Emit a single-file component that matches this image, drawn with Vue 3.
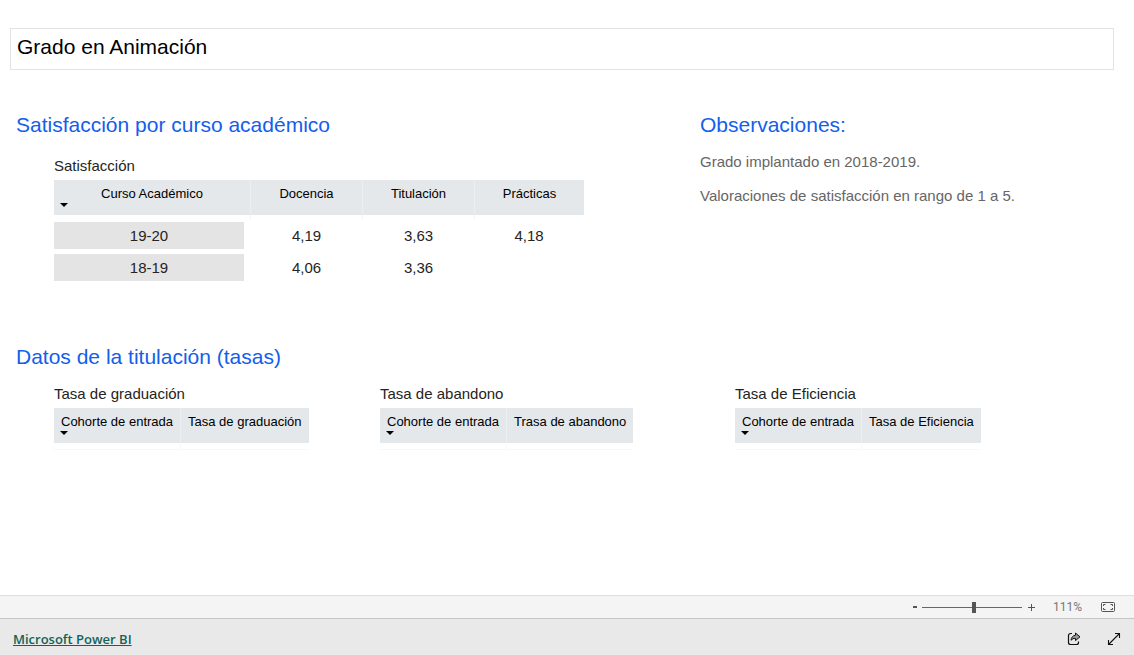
<script setup>
import { ref } from 'vue'

const satisfaction = [
  { year: '19-20', values: ['4,19', '3,63', '4,18'] },
  { year: '18-19', values: ['4,06', '3,36', ''] },
]
const rates = [
  { title: 'Tasa de graduación', measure: 'Tasa de graduación' },
  { title: 'Tasa de abandono', measure: 'Trasa de abandono' },
  { title: 'Tasa de Eficiencia', measure: 'Tasa de Eficiencia' },
]
const zoom = ref(111)
</script>

<template>
  <div class="viewer">
    <main class="report">
      <h1 class="title">Grado en Animación</h1>

      <div class="top">
        <section class="satisfaction">
          <h2>Satisfacción por curso académico</h2>
          <table class="grid scores">
            <caption>Satisfacción</caption>
            <colgroup>
              <col class="c-year" />
              <col class="c-score" />
              <col class="c-score" />
              <col class="c-last" />
            </colgroup>
            <thead>
              <tr>
                <th scope="col" aria-sort="descending">
                  Curso Académico
                  <svg class="sort" viewBox="0 0 8 4" aria-hidden="true"><path d="M0 0h8L4 4z" /></svg>
                </th>
                <th scope="col">Docencia</th>
                <th scope="col">Titulación</th>
                <th scope="col">Prácticas</th>
              </tr>
            </thead>
            <tbody>
              <tr v-for="row in satisfaction" :key="row.year">
                <th scope="row">{{ row.year }}</th>
                <td v-for="(value, i) in row.values" :key="i">{{ value }}</td>
              </tr>
            </tbody>
          </table>
        </section>

        <section class="notes">
          <h2>Observaciones:</h2>
          <p>Grado implantado en 2018-2019.</p>
          <p>Valoraciones de satisfacción en rango de 1 a 5.</p>
        </section>
      </div>

      <section class="rates">
        <h2>Datos de la titulación (tasas)</h2>
        <div class="rate-list">
          <table v-for="rate in rates" :key="rate.title" class="grid rate">
            <caption>{{ rate.title }}</caption>
            <thead>
              <tr>
                <th scope="col" aria-sort="descending">
                  Cohorte de entrada
                  <svg class="sort" viewBox="0 0 8 4" aria-hidden="true"><path d="M0 0h8L4 4z" /></svg>
                </th>
                <th scope="col">{{ rate.measure }}</th>
              </tr>
            </thead>
            <tbody>
              <tr class="empty">
                <td></td>
                <td></td>
              </tr>
            </tbody>
          </table>
        </div>
      </section>
    </main>

    <div class="zoombar">
      <button type="button" class="step" aria-label="Alejar" @click="zoom--">
        <svg width="4" height="2" viewBox="0 0 4 2" aria-hidden="true"><path d="M0 0h4v2H0z" fill="#555" /></svg>
      </button>
      <input v-model.number="zoom" type="range" min="10" max="204" aria-label="Zoom" />
      <button type="button" class="step" aria-label="Acercar" @click="zoom++">
        <svg width="7" height="7" viewBox="0 0 7 7" aria-hidden="true"><path d="M0 3.5h7M3.5 0v7" stroke="#555" /></svg>
      </button>
      <span class="percent">{{ zoom }}%</span>
      <button type="button" aria-label="Ajustar a la página">
        <svg width="14" height="10" viewBox="0 0 14 10" fill="none" stroke="#555">
          <rect x=".5" y=".5" width="13" height="9" rx="1" />
          <path d="M2.5 4V2.5H4.5M9.5 2.5h2V4M11.5 6v1.5h-2M4.5 7.5h-2V6" />
        </svg>
      </button>
    </div>

    <footer class="footer">
      <a href="#">Microsoft Power BI</a>
      <div class="actions">
        <button type="button" aria-label="Compartir">
          <svg width="14" height="14" viewBox="0 0 14 14" fill="none" stroke="#111" stroke-linejoin="round">
            <path d="M5 1.5H3.5A2 2 0 0 0 1.5 3.5v7a2 2 0 0 0 2 2h6a2 2 0 0 0 2-2V9.5" stroke-width="1.2" />
            <path d="M8.500 1 13 4.800 8.500 8.600V6.400C6.500 6.300 5.200 6.900 4 8.300 4.300 5.500 5.800 3.500 8.500 3.200z" fill="#999" />
          </svg>
        </button>
        <button type="button" aria-label="Pantalla completa">
          <svg width="14" height="14" viewBox="0 0 14 14" fill="none" stroke="#111" stroke-width="1.1">
            <path d="M1.5 12.5l11-11M8 1.5h4.5V6M1.5 8v4.5H6" />
          </svg>
        </button>
      </div>
    </footer>
  </div>
</template>

<style>
body {
  margin: 0;
}
</style>

<style scoped>
.viewer {
  display: flex;
  flex-direction: column;
  min-height: 100vh;
  background: #fff;
  color: #000;
  font-family: "Liberation Sans", Arial, sans-serif;
}

.report {
  flex: 1;
  padding: 28px 20px 20px 10px;
}

h1,
h2,
p {
  margin: 0;
  font-weight: 400;
}

.title {
  box-sizing: border-box;
  min-height: 42px;
  padding: 6px;
  border: 1px solid #e3e3e3;
  font-size: 21px;
  line-height: 24px;
}

h2 {
  color: #135eeb;
  font-size: 21px;
  line-height: 24px;
}

.top {
  display: grid;
  grid-template-columns: 5fr 3fr;
  margin-top: 43px;
}

.satisfaction,
.rates {
  padding-left: 6px;
}

.grid {
  border-spacing: 0;
  text-align: center;
}

caption {
  padding-bottom: 4px;
  color: #252423;
  font-size: 15px;
  line-height: 20px;
  text-align: left;
  white-space: nowrap;
}

thead th {
  position: relative;
  box-sizing: border-box;
  height: 35px;
  padding: 6px 7px;
  border-right: 1px solid #eceff1;
  background: #e4e8eb;
  font-size: 13px;
  font-weight: 400;
  line-height: 16px;
  vertical-align: top;
  white-space: nowrap;
}

thead th:last-child {
  border-right: 0;
}

.sort {
  position: absolute;
  left: 6px;
  bottom: 8px;
  width: 8px;
  height: 4px;
}

.scores {
  width: 530px;
  margin: 19px 0 0 38px;
  table-layout: fixed;
}

.scores thead th {
  height: 42px;
  border-bottom: 7px solid #fff;
  background-clip: padding-box;
}

.c-year {
  width: 197px;
}

.c-score {
  width: 112px;
}

.c-last {
  width: 109px;
}

tbody th,
tbody td {
  padding: 0 1px 0 0;
  border-bottom: 5px solid transparent;
  background-clip: padding-box;
  color: #252423;
  font-size: 15px;
  font-weight: 400;
  line-height: 27px;
}

tbody th {
  padding: 0;
  border-right: 7px solid transparent;
  background-color: #e4e4e4;
}

.notes h2 {
  margin-bottom: 15px;
}

.notes p {
  margin-bottom: 14px;
  color: #666;
  font-size: 15px;
  line-height: 20px;
}

.rates {
  margin-top: 59px;
}

.rate-list {
  display: grid;
  grid-template-columns: 326fr 355fr 379fr;
  justify-items: start;
  margin: 15px 0 0 38px;
}

.empty td {
  height: 6px;
  padding: 0;
  border-bottom: 1px solid #f8f8f8;
}

.empty td:first-child {
  border-right: 1px solid #f8f8f8;
}

.zoombar {
  display: flex;
  align-items: center;
  justify-content: flex-end;
  box-sizing: border-box;
  height: 23px;
  padding-right: 19px;
  border-top: 1px solid #dedede;
  background: #f4f4f4;
}

button {
  display: flex;
  align-items: center;
  justify-content: center;
  padding: 0;
  border: 0;
  background: none;
}

.step {
  width: 14px;
  height: 18px;
}

input {
  width: 100px;
  height: 12px;
  margin: 0 3px 0 0;
  appearance: none;
  background: linear-gradient(#666, #666) center / 100% 1px no-repeat;
}

input::-webkit-slider-thumb {
  width: 4px;
  height: 11px;
  appearance: none;
  background: #555;
}

.percent {
  margin: 0 19px 0 14px;
  color: #777;
  font-family: Roboto, sans-serif;
  font-size: 12px;
}

.footer {
  display: flex;
  align-items: center;
  justify-content: space-between;
  box-sizing: border-box;
  height: 37px;
  padding: 4px 13px 0;
  border-top: 1px solid #c4c4c4;
  background: #e9e9e9;
}

.footer a {
  color: #106458;
  font-family: "Open Sans", sans-serif;
  font-size: 13px;
  font-weight: 600;
  line-height: 18px;
}

.actions {
  display: flex;
  gap: 26px;
}
</style>
